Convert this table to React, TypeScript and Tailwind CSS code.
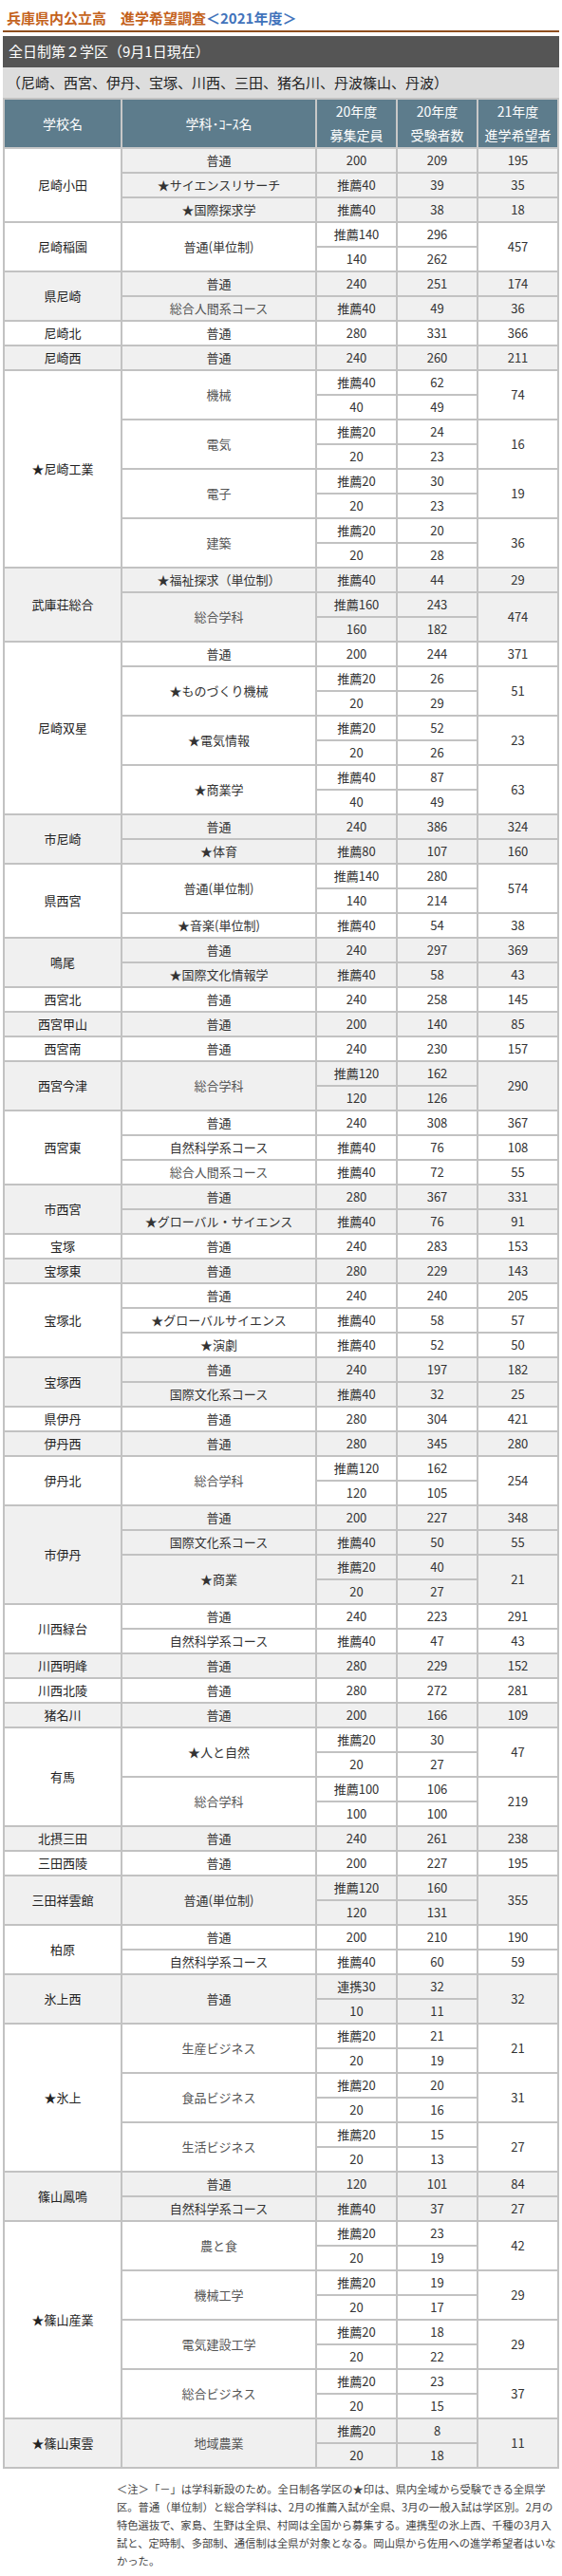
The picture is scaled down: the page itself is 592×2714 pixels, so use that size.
import React from "react";

type Sub = [string, string];
type Course = { name: string; subs: Sub[]; hope: string };
type School = { name: string; courses: Course[] };

const c = (name: string, subs: Sub[], hope: string): Course => ({ name, subs, hope });

const schools: School[] = [
  { name: "尼崎小田", courses: [c("普通", [["200", "209"]], "195"), c("★サイエンスリサーチ", [["推薦40", "39"]], "35"), c("★国際探求学", [["推薦40", "38"]], "18")] },
  { name: "尼崎稲園", courses: [c("普通(単位制)", [["推薦140", "296"], ["140", "262"]], "457")] },
  { name: "県尼崎", courses: [c("普通", [["240", "251"]], "174"), c("総合人間系コース", [["推薦40", "49"]], "36")] },
  { name: "尼崎北", courses: [c("普通", [["280", "331"]], "366")] },
  { name: "尼崎西", courses: [c("普通", [["240", "260"]], "211")] },
  {
    name: "★尼崎工業",
    courses: [
      c("機械", [["推薦40", "62"], ["40", "49"]], "74"),
      c("電気", [["推薦20", "24"], ["20", "23"]], "16"),
      c("電子", [["推薦20", "30"], ["20", "23"]], "19"),
      c("建築", [["推薦20", "20"], ["20", "28"]], "36"),
    ],
  },
  { name: "武庫荘総合", courses: [c("★福祉探求（単位制）", [["推薦40", "44"]], "29"), c("総合学科", [["推薦160", "243"], ["160", "182"]], "474")] },
  {
    name: "尼崎双星",
    courses: [
      c("普通", [["200", "244"]], "371"),
      c("★ものづくり機械", [["推薦20", "26"], ["20", "29"]], "51"),
      c("★電気情報", [["推薦20", "52"], ["20", "26"]], "23"),
      c("★商業学", [["推薦40", "87"], ["40", "49"]], "63"),
    ],
  },
  { name: "市尼崎", courses: [c("普通", [["240", "386"]], "324"), c("★体育", [["推薦80", "107"]], "160")] },
  { name: "県西宮", courses: [c("普通(単位制)", [["推薦140", "280"], ["140", "214"]], "574"), c("★音楽(単位制)", [["推薦40", "54"]], "38")] },
  { name: "鳴尾", courses: [c("普通", [["240", "297"]], "369"), c("★国際文化情報学", [["推薦40", "58"]], "43")] },
  { name: "西宮北", courses: [c("普通", [["240", "258"]], "145")] },
  { name: "西宮甲山", courses: [c("普通", [["200", "140"]], "85")] },
  { name: "西宮南", courses: [c("普通", [["240", "230"]], "157")] },
  { name: "西宮今津", courses: [c("総合学科", [["推薦120", "162"], ["120", "126"]], "290")] },
  { name: "西宮東", courses: [c("普通", [["240", "308"]], "367"), c("自然科学系コース", [["推薦40", "76"]], "108"), c("総合人間系コース", [["推薦40", "72"]], "55")] },
  { name: "市西宮", courses: [c("普通", [["280", "367"]], "331"), c("★グローバル・サイエンス", [["推薦40", "76"]], "91")] },
  { name: "宝塚", courses: [c("普通", [["240", "283"]], "153")] },
  { name: "宝塚東", courses: [c("普通", [["280", "229"]], "143")] },
  { name: "宝塚北", courses: [c("普通", [["240", "240"]], "205"), c("★グローバルサイエンス", [["推薦40", "58"]], "57"), c("★演劇", [["推薦40", "52"]], "50")] },
  { name: "宝塚西", courses: [c("普通", [["240", "197"]], "182"), c("国際文化系コース", [["推薦40", "32"]], "25")] },
  { name: "県伊丹", courses: [c("普通", [["280", "304"]], "421")] },
  { name: "伊丹西", courses: [c("普通", [["280", "345"]], "280")] },
  { name: "伊丹北", courses: [c("総合学科", [["推薦120", "162"], ["120", "105"]], "254")] },
  { name: "市伊丹", courses: [c("普通", [["200", "227"]], "348"), c("国際文化系コース", [["推薦40", "50"]], "55"), c("★商業", [["推薦20", "40"], ["20", "27"]], "21")] },
  { name: "川西緑台", courses: [c("普通", [["240", "223"]], "291"), c("自然科学系コース", [["推薦40", "47"]], "43")] },
  { name: "川西明峰", courses: [c("普通", [["280", "229"]], "152")] },
  { name: "川西北陵", courses: [c("普通", [["280", "272"]], "281")] },
  { name: "猪名川", courses: [c("普通", [["200", "166"]], "109")] },
  { name: "有馬", courses: [c("★人と自然", [["推薦20", "30"], ["20", "27"]], "47"), c("総合学科", [["推薦100", "106"], ["100", "100"]], "219")] },
  { name: "北摂三田", courses: [c("普通", [["240", "261"]], "238")] },
  { name: "三田西陵", courses: [c("普通", [["200", "227"]], "195")] },
  { name: "三田祥雲館", courses: [c("普通(単位制)", [["推薦120", "160"], ["120", "131"]], "355")] },
  { name: "柏原", courses: [c("普通", [["200", "210"]], "190"), c("自然科学系コース", [["推薦40", "60"]], "59")] },
  { name: "氷上西", courses: [c("普通", [["連携30", "32"], ["10", "11"]], "32")] },
  {
    name: "★氷上",
    courses: [
      c("生産ビジネス", [["推薦20", "21"], ["20", "19"]], "21"),
      c("食品ビジネス", [["推薦20", "20"], ["20", "16"]], "31"),
      c("生活ビジネス", [["推薦20", "15"], ["20", "13"]], "27"),
    ],
  },
  { name: "篠山鳳鳴", courses: [c("普通", [["120", "101"]], "84"), c("自然科学系コース", [["推薦40", "37"]], "27")] },
  {
    name: "★篠山産業",
    courses: [
      c("農と食", [["推薦20", "23"], ["20", "19"]], "42"),
      c("機械工学", [["推薦20", "19"], ["20", "17"]], "29"),
      c("電気建設工学", [["推薦20", "18"], ["20", "22"]], "29"),
      c("総合ビジネス", [["推薦20", "23"], ["20", "15"]], "37"),
    ],
  },
  { name: "★篠山東雲", courses: [c("地域農業", [["推薦20", "8"], ["20", "18"]], "11")] },
];

// course names that render a little lighter in the source page
const lightNames = new Set([
  "機械",
  "電気",
  "電子",
  "建築",
  "総合学科",
  "総合人間系コース",
  "生産ビジネス",
  "食品ビジネス",
  "生活ビジネス",
  "農と食",
  "機械工学",
  "電気建設工学",
  "総合ビジネス",
  "地域農業",
]);

const cell = "border-r-2 border-b-2 border-[#c2c2c2] p-0 text-center align-middle";
const head = "border-r-2 border-b-2 border-[#c8c8c8] p-0 text-center align-middle bg-[#5d7c8c] text-white text-[14px] leading-[25px] font-normal";

function Body() {
  const rows: React.ReactNode[] = [];
  schools.forEach((s, si) => {
    const bg = si % 2 === 0 ? "bg-[#f0f0f0]" : "bg-white";
    const span = s.courses.reduce((n, co) => n + co.subs.length, 0);
    s.courses.forEach((co, ci) => {
      co.subs.forEach((sub, ri) => {
        rows.push(
          <tr key={`${si}-${ci}-${ri}`} className={bg}>
            {ci === 0 && ri === 0 && (
              <td rowSpan={span} className={`${cell} text-[#222] ${si === 0 ? "bg-white" : ""}`}>
                {s.name}
              </td>
            )}
            {ri === 0 && (
              <td
                rowSpan={co.subs.length}
                className={`${cell} ${lightNames.has(co.name) ? "text-[#555]" : "text-[#333]"}`}
              >
                {co.name}
              </td>
            )}
            <td className={`${cell} text-[#333]`}>
              <div className="h-[24px] leading-[24px]">{sub[0]}</div>
            </td>
            <td className={`${cell} text-[#333]`}>
              <div className="h-[24px] leading-[24px]">{sub[1]}</div>
            </td>
            {ri === 0 && (
              <td rowSpan={co.subs.length} className={`${cell} text-[#333]`}>
                {co.hope}
              </td>
            )}
          </tr>
        );
      });
    });
  });
  return <tbody className="text-[13px]">{rows}</tbody>;
}

export default function App() {
  return (
    <div className="w-[592px] bg-white font-['Noto_Sans_CJK_JP',sans-serif] px-[3px] pb-[8px]">
      <div className="h-[34px] pt-[4px] flex items-center border-b-2 border-[#8f4f1f] pl-[4px]">
        <h1 className="text-[15px] font-bold text-[#c4621c] leading-none">
          兵庫県内公立高　進学希望調査<span className="text-[#4173bb]">＜2021年度＞</span>
        </h1>
      </div>

      <div className="mt-[4px] h-[33px] bg-[#555555] text-white text-[15px] flex items-center pl-[6px]">
        全日制第２学区（9月1日現在）
      </div>
      <div className="h-[32px] bg-[#dddddd] text-[#222] text-[15px] flex items-center pl-[4px]">
        （尼崎、西宮、伊丹、宝塚、川西、三田、猪名川、丹波篠山、丹波）
      </div>

      <table className="w-full table-fixed border-separate border-spacing-0 border-t-2 border-l-2 border-[#c2c2c2]">
        <colgroup>
          <col className="w-[124px]" />
          <col className="w-[205px]" />
          <col className="w-[85px]" />
          <col className="w-[85px]" />
          <col className="w-[85px]" />
        </colgroup>
        <thead>
          <tr>
            <th className={`${head} h-[50px]`}>学校名</th>
            <th className={head}>学科･ｺｰｽ名</th>
            <th className={head}>
              20年度
              <br />
              募集定員
            </th>
            <th className={head}>
              20年度
              <br />
              受験者数
            </th>
            <th className={head}>
              21年度
              <br />
              進学希望者
            </th>
          </tr>
        </thead>
        <Body />
      </table>

      <div className="mt-[12px] ml-[120px] text-[11.3px] leading-[19px] text-[#444] whitespace-nowrap">
        <p>＜注＞「－」は学科新設のため。全日制各学区の★印は、県内全域から受験できる全県学</p>
        <p>区。普通（単位制）と総合学科は、2月の推薦入試が全県、3月の一般入試は学区別。2月の</p>
        <p>特色選抜で、家島、生野は全県、村岡は全国から募集する。連携型の氷上西、千種の3月入</p>
        <p>試と、定時制、多部制、通信制は全県が対象となる。岡山県から佐用への進学希望者はいな</p>
        <p>かった。</p>
      </div>
    </div>
  );
}
